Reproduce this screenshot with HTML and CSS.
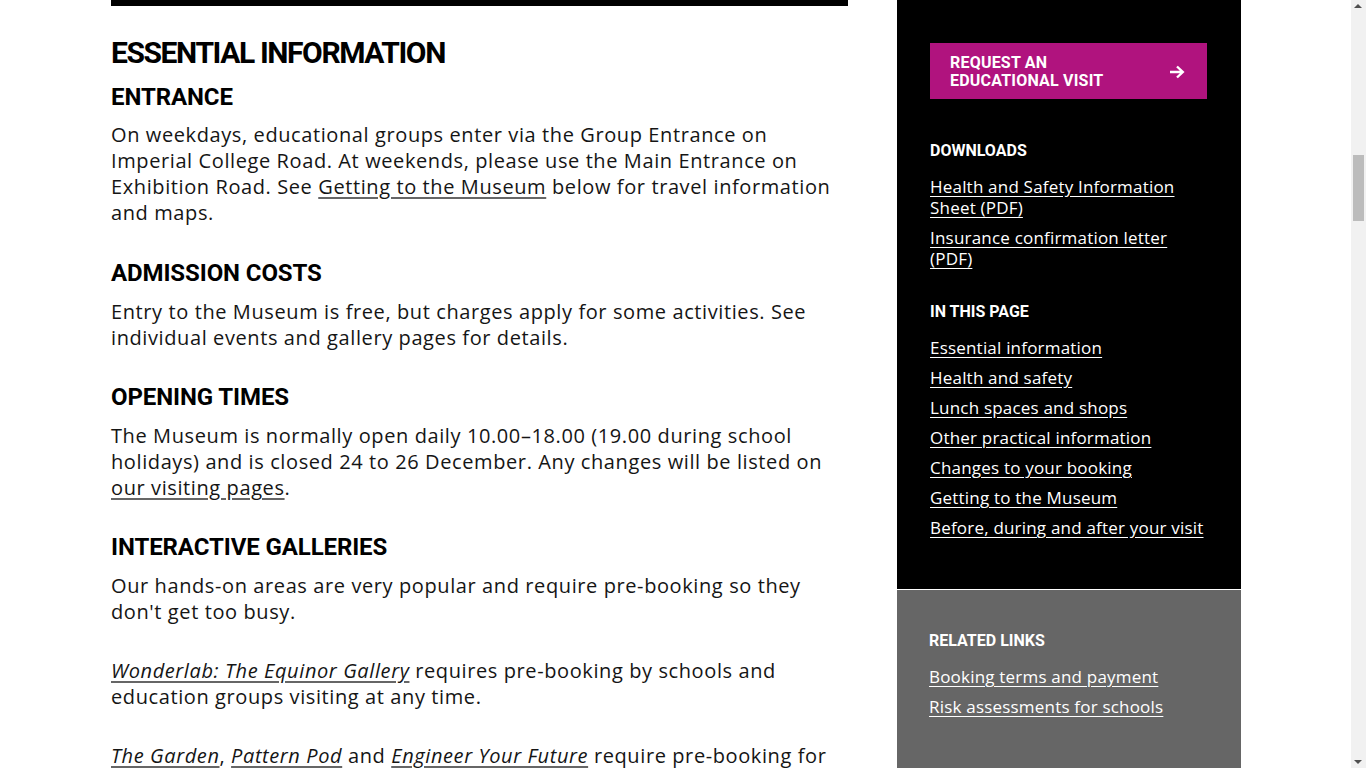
FILE: index.html
```html
<!DOCTYPE html>
<html lang="en">
<head>
<meta charset="utf-8">
<title>Essential information</title>
<link rel="stylesheet" href="styles.css">
</head>
<body>
<div class="page">
  <main class="main">
    <div class="topbar"></div>
    <h2 class="h2">Essential information</h2>
    <h3 class="h3 h3-first">Entrance</h3>
    <p class="p p-first">On weekdays, educational groups enter via the Group Entrance on Imperial College Road. At weekends, please use the Main Entrance on Exhibition Road. See <a href="#" class="link">Getting to the Museum</a> below for travel information and maps.</p>
    <h3 class="h3">Admission costs</h3>
    <p class="p">Entry to the Museum is free, but charges apply for some activities. See individual events and gallery pages for details.</p>
    <h3 class="h3">Opening times</h3>
    <p class="p">The Museum is normally open daily 10.00–18.00 (19.00 during school holidays) and is closed 24 to 26 December. Any changes will be listed on <a href="#" class="link">our visiting pages</a>.</p>
    <h3 class="h3">Interactive galleries</h3>
    <p class="p">Our hands-on areas are very popular and require pre-booking so they don't get too busy.</p>
    <p class="p"><a href="#" class="link em">Wonderlab: The Equinor Gallery</a> requires pre-booking by schools and education groups visiting at any time.</p>
    <p class="p"><a href="#" class="link em">The Garden</a>, <a href="#" class="link em">Pattern Pod</a> and <a href="#" class="link em">Engineer Your Future</a> require pre-booking for school groups visiting during term time, and for all groups of more than ten people.</p>
    <p class="p">Please make sure your group arrives on time for its booked slot, as late arrivals may not be admitted.</p>
  </main>
  <aside class="side">
    <div class="side-dark">
      <a href="#" class="cta">
        <span class="cta-text">Request an<br>educational visit</span>
        <svg class="cta-arrow" width="16" height="14" viewBox="0 0 16 14" aria-hidden="true"><path d="M1 7h12.5M8 1.5L13.8 7 8 12.5" fill="none" stroke="#fff" stroke-width="2.4"/></svg>
      </a>
      <h4 class="side-h">Downloads</h4>
      <ul class="dl-list">
        <li><a href="#" class="side-link">Health and Safety Information Sheet (PDF)</a></li>
        <li><a href="#" class="side-link">Insurance confirmation letter (PDF)</a></li>
      </ul>
      <h4 class="side-h">In this page</h4>
      <ul class="nav-list">
        <li><a href="#" class="side-link">Essential information</a></li>
        <li><a href="#" class="side-link">Health and safety</a></li>
        <li><a href="#" class="side-link">Lunch spaces and shops</a></li>
        <li><a href="#" class="side-link">Other practical information</a></li>
        <li><a href="#" class="side-link">Changes to your booking</a></li>
        <li><a href="#" class="side-link">Getting to the Museum</a></li>
        <li><a href="#" class="side-link">Before, during and after your visit</a></li>
      </ul>
    </div>
    <div class="side-grey">
      <h4 class="side-h">Related links</h4>
      <ul class="nav-list">
        <li><a href="#" class="side-link">Booking terms and payment</a></li>
        <li><a href="#" class="side-link">Risk assessments for schools</a></li>
      </ul>
    </div>
  </aside>
</div>
<div class="scrollbar" aria-hidden="true">
  <span class="sb-up"></span>
  <span class="sb-thumb"></span>
  <span class="sb-down"></span>
</div>
</body>
</html>
```
FILE: styles.css
```css
html, body {
  margin: 0;
  padding: 0;
  background: #fff;
}
body {
  font-family: Roboto, "Liberation Sans", sans-serif;
  color: #111;
}
.page {
  display: flex;
  align-items: flex-start;
  padding-left: 111px;
}
.main {
  width: 737px;
  flex: none;
  padding-bottom: 200px;
}
.topbar {
  height: 6px;
  background: #000;
}
.h2 {
  margin: 28px 0 12px;
  font-family: Roboto, sans-serif;
  font-weight: 700;
  font-size: 30px;
  line-height: 38px;
  letter-spacing: -1.4px;
  text-transform: uppercase;
  color: #000;
}
.h3 {
  margin: 0 0 13px;
  font-family: Roboto, sans-serif;
  font-weight: 700;
  font-size: 24px;
  line-height: 26px;
  letter-spacing: -0.1px;
  text-transform: uppercase;
  color: #000;
}
.h3-first {
  margin-bottom: 12px;
}
.p {
  margin: 0 0 33px;
  font-family: "Open Sans", Roboto, sans-serif;
  font-weight: 400;
  font-size: 20px;
  line-height: 26px;
  letter-spacing: 0.6px;
  color: #151515;
}
.p-first {
  margin-bottom: 34px;
}
.link {
  color: #151515;
  text-decoration: underline;
  text-decoration-color: #666;
  text-decoration-thickness: 2px;
  text-underline-offset: 3px;
}
.em {
  font-style: italic;
}
.side {
  width: 344px;
  flex: none;
  margin-left: 49px;
}
.side-dark {
  background: #000;
  padding: 43px 34px 18px 33px;
  border-bottom: 1px solid #fff;
}
.side-grey {
  background: #666;
  padding: 41px 32px 60px;
  min-height: 140px;
}
.cta {
  display: flex;
  align-items: center;
  justify-content: space-between;
  height: 56px;
  box-sizing: border-box;
  padding: 2px 22px 0 20px;
  background: #b0137e;
  color: #fff;
  text-decoration: none;
  margin-bottom: 42px;
}
.cta-text {
  font-family: Roboto, sans-serif;
  font-weight: 700;
  font-size: 16px;
  line-height: 18px;
  text-transform: uppercase;
  letter-spacing: 0.2px;
}
.side-h {
  margin: 0 0 15px;
  font-family: Roboto, sans-serif;
  font-weight: 700;
  font-size: 16px;
  line-height: 20px;
  text-transform: uppercase;
  color: #fff;
}
.dl-list, .nav-list {
  list-style: none;
  margin: 0 0 33px;
  padding: 0;
}
.dl-list li, .nav-list li {
  margin-bottom: 9px;
}
.dl-list li:last-child, .nav-list li:last-child {
  margin-bottom: 0;
}
.side-link {
  font-family: "Open Sans", Roboto, sans-serif;
  font-size: 17px;
  line-height: 21px;
  letter-spacing: 0.2px;
  color: #fff;
  text-decoration: underline;
  text-underline-offset: 3px;
}
.scrollbar {
  position: fixed;
  top: 0;
  right: 0;
  width: 15px;
  height: 100vh;
  background: #f1f1f1;
}
.sb-thumb {
  position: absolute;
  left: 2px;
  top: 155px;
  width: 11px;
  height: 66px;
  background: #bcbcbc;
}
.sb-up, .sb-down {
  position: absolute;
  left: 3px;
  width: 0;
  height: 0;
  border-left: 4px solid transparent;
  border-right: 4px solid transparent;
}
.sb-up {
  top: 4px;
  border-bottom: 4px solid #505050;
}
.sb-down {
  bottom: 4px;
  border-top: 4px solid #505050;
}
```
